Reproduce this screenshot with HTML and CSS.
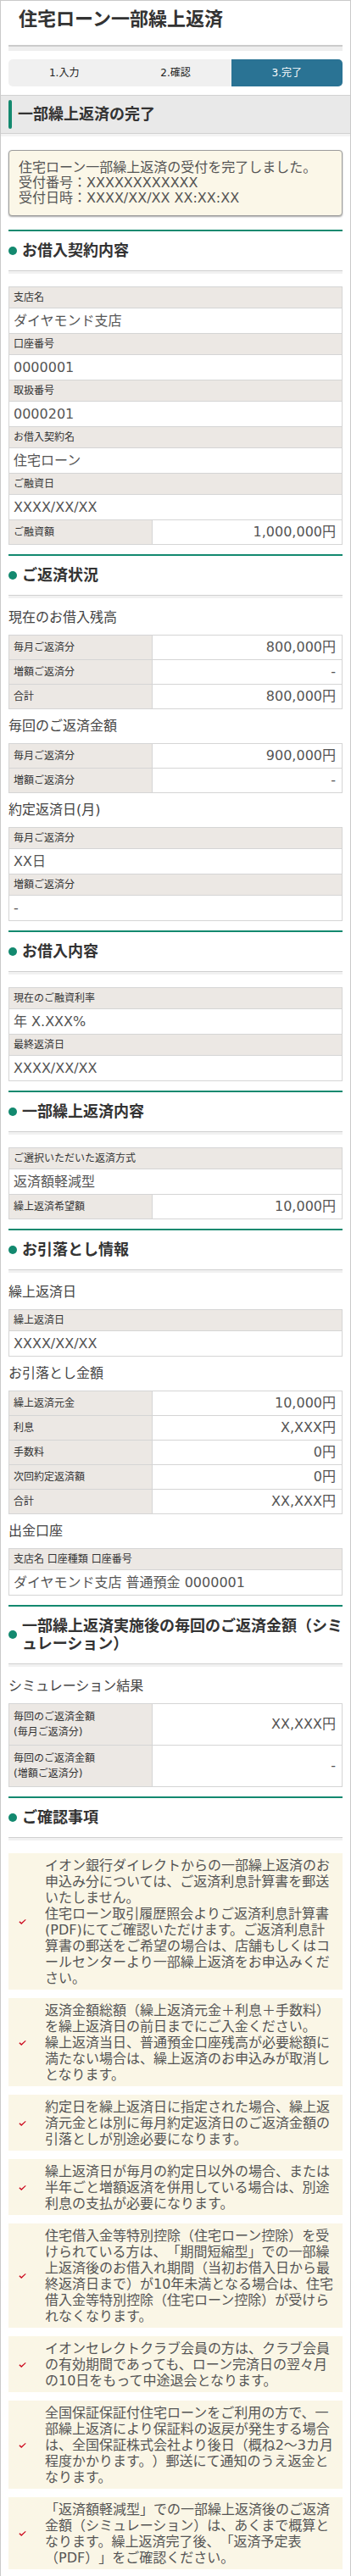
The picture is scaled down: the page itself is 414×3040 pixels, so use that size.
FILE: index.html
```html
<!DOCTYPE html>
<html lang="ja">
  <head>
    <meta charset="utf-8">
    <title>住宅ローン一部繰上返済</title>
    <link rel="stylesheet" href="styles.css">
  </head>
  <body>
    <div class="page">
      <div class="inner">
        <h1 class="page-title">住宅ローン一部繰上返済</h1>
        <ol class="steps">
          <li>1.入力</li>
          <li>2.確認</li>
          <li class="current">3.完了</li>
        </ol>
      </div>

      <div class="band">
        <span class="band-bar"></span>
        <h2>一部繰上返済の完了</h2>
      </div>

      <div class="inner">
        <div class="message">
          住宅ローン一部繰上返済の受付を完了しました。<br>
          受付番号：XXXXXXXXXXXX<br>
          受付日時：XXXX/XX/XX XX:XX:XX
        </div>

        <section class="section">
          <h2 class="section-title"><span class="dot"></span><span>お借入契約内容</span></h2>
          <div class="section-body">
            <table class="info">
              <colgroup><col class="col-label"><col></colgroup>
              <tr><th colspan="2">支店名</th></tr>
              <tr><td colspan="2">ダイヤモンド支店</td></tr>
              <tr><th colspan="2">口座番号</th></tr>
              <tr><td colspan="2">0000001</td></tr>
              <tr><th colspan="2">取扱番号</th></tr>
              <tr><td colspan="2">0000201</td></tr>
              <tr><th colspan="2">お借入契約名</th></tr>
              <tr><td colspan="2">住宅ローン</td></tr>
              <tr><th colspan="2">ご融資日</th></tr>
              <tr><td colspan="2">XXXX/XX/XX</td></tr>
              <tr class="pair"><th>ご融資額</th><td class="amount">1,000,000円</td></tr>
            </table>
          </div>
        </section>

        <section class="section">
          <h2 class="section-title"><span class="dot"></span><span>ご返済状況</span></h2>
          <div class="section-body">
            <h3 class="sub-title">現在のお借入残高</h3>
            <table class="info">
              <colgroup><col class="col-label"><col></colgroup>
              <tr class="pair"><th>毎月ご返済分</th><td class="amount">800,000円</td></tr>
              <tr class="pair"><th>増額ご返済分</th><td class="amount">-</td></tr>
              <tr class="pair"><th>合計</th><td class="amount">800,000円</td></tr>
            </table>
            <h3 class="sub-title">毎回のご返済金額</h3>
            <table class="info">
              <colgroup><col class="col-label"><col></colgroup>
              <tr class="pair"><th>毎月ご返済分</th><td class="amount">900,000円</td></tr>
              <tr class="pair"><th>増額ご返済分</th><td class="amount">-</td></tr>
            </table>
            <h3 class="sub-title">約定返済日(月)</h3>
            <table class="info">
              <colgroup><col class="col-label"><col></colgroup>
              <tr><th colspan="2">毎月ご返済分</th></tr>
              <tr><td colspan="2">XX日</td></tr>
              <tr><th colspan="2">増額ご返済分</th></tr>
              <tr><td colspan="2">-</td></tr>
            </table>
          </div>
        </section>

        <section class="section">
          <h2 class="section-title"><span class="dot"></span><span>お借入内容</span></h2>
          <div class="section-body">
            <table class="info">
              <colgroup><col class="col-label"><col></colgroup>
              <tr><th colspan="2">現在のご融資利率</th></tr>
              <tr><td colspan="2">年 X.XXX%</td></tr>
              <tr><th colspan="2">最終返済日</th></tr>
              <tr><td colspan="2">XXXX/XX/XX</td></tr>
            </table>
          </div>
        </section>

        <section class="section">
          <h2 class="section-title"><span class="dot"></span><span>一部繰上返済内容</span></h2>
          <div class="section-body">
            <table class="info">
              <colgroup><col class="col-label"><col></colgroup>
              <tr><th colspan="2">ご選択いただいた返済方式</th></tr>
              <tr><td colspan="2">返済額軽減型</td></tr>
              <tr class="pair"><th>繰上返済希望額</th><td class="amount">10,000円</td></tr>
            </table>
          </div>
        </section>

        <section class="section">
          <h2 class="section-title"><span class="dot"></span><span>お引落とし情報</span></h2>
          <div class="section-body">
            <h3 class="sub-title">繰上返済日</h3>
            <table class="info">
              <colgroup><col class="col-label"><col></colgroup>
              <tr><th colspan="2">繰上返済日</th></tr>
              <tr><td colspan="2">XXXX/XX/XX</td></tr>
            </table>
            <h3 class="sub-title">お引落とし金額</h3>
            <table class="info">
              <colgroup><col class="col-label"><col></colgroup>
              <tr class="pair"><th>繰上返済元金</th><td class="amount">10,000円</td></tr>
              <tr class="pair"><th>利息</th><td class="amount">X,XXX円</td></tr>
              <tr class="pair"><th>手数料</th><td class="amount">0円</td></tr>
              <tr class="pair"><th>次回約定返済額</th><td class="amount">0円</td></tr>
              <tr class="pair"><th>合計</th><td class="amount">XX,XXX円</td></tr>
            </table>
            <h3 class="sub-title">出金口座</h3>
            <table class="info">
              <colgroup><col class="col-label"><col></colgroup>
              <tr><th colspan="2">支店名 口座種類 口座番号</th></tr>
              <tr><td colspan="2">ダイヤモンド支店 普通預金 0000001</td></tr>
            </table>
          </div>
        </section>

        <section class="section">
          <h2 class="section-title"><span class="dot"></span><span>一部繰上返済実施後の毎回のご返済金額（シミュレーション）</span></h2>
          <div class="section-body">
            <h3 class="sub-title">シミュレーション結果</h3>
            <table class="info">
              <colgroup><col class="col-label"><col></colgroup>
              <tr class="pair"><th class="multi">毎回のご返済金額<br>(毎月ご返済分)</th><td class="amount">XX,XXX円</td></tr>
              <tr class="pair"><th class="multi">毎回のご返済金額<br>(増額ご返済分)</th><td class="amount">-</td></tr>
            </table>
          </div>
        </section>

        <section class="section">
          <h2 class="section-title"><span class="dot"></span><span>ご確認事項</span></h2>
          <div class="section-body">
            <ul class="notes">
              <li class="note">
                <svg class="check" viewBox="0 0 10 8"><path d="M0.4 4.4 L1.6 3.3 L3.6 5 L8.8 0.6 L9.6 1.5 L3.6 7.4 Z"/></svg>
                <p>イオン銀行ダイレクトからの一部繰上返済のお申込み分については、ご返済利息計算書を郵送いたしません。<br>住宅ローン取引履歴照会よりご返済利息計算書(PDF)にてご確認いただけます。ご返済利息計算書の郵送をご希望の場合は、店舗もしくはコールセンターより一部繰上返済をお申込みください。</p>
              </li>
              <li class="note">
                <svg class="check" viewBox="0 0 10 8"><path d="M0.4 4.4 L1.6 3.3 L3.6 5 L8.8 0.6 L9.6 1.5 L3.6 7.4 Z"/></svg>
                <p>返済金額総額（繰上返済元金＋利息＋手数料）を繰上返済日の前日までにご入金ください。<br>繰上返済当日、普通預金口座残高が必要総額に満たない場合は、繰上返済のお申込みが取消しとなります。</p>
              </li>
              <li class="note">
                <svg class="check" viewBox="0 0 10 8"><path d="M0.4 4.4 L1.6 3.3 L3.6 5 L8.8 0.6 L9.6 1.5 L3.6 7.4 Z"/></svg>
                <p>約定日を繰上返済日に指定された場合、繰上返済元金とは別に毎月約定返済日のご返済金額の引落としが別途必要になります。</p>
              </li>
              <li class="note">
                <svg class="check" viewBox="0 0 10 8"><path d="M0.4 4.4 L1.6 3.3 L3.6 5 L8.8 0.6 L9.6 1.5 L3.6 7.4 Z"/></svg>
                <p>繰上返済日が毎月の約定日以外の場合、または半年ごと増額返済を併用している場合は、別途利息の支払が必要になります。</p>
              </li>
              <li class="note">
                <svg class="check" viewBox="0 0 10 8"><path d="M0.4 4.4 L1.6 3.3 L3.6 5 L8.8 0.6 L9.6 1.5 L3.6 7.4 Z"/></svg>
                <p>住宅借入金等特別控除（住宅ローン控除）を受けられている方は、「期間短縮型」での一部繰上返済後のお借入れ期間（当初お借入日から最終返済日まで）が10年未満となる場合は、住宅借入金等特別控除（住宅ローン控除）が受けられなくなります。</p>
              </li>
              <li class="note">
                <svg class="check" viewBox="0 0 10 8"><path d="M0.4 4.4 L1.6 3.3 L3.6 5 L8.8 0.6 L9.6 1.5 L3.6 7.4 Z"/></svg>
                <p>イオンセレクトクラブ会員の方は、クラブ会員の有効期間であっても、ローン完済日の翌々月の10日をもって中途退会となります。</p>
              </li>
              <li class="note">
                <svg class="check" viewBox="0 0 10 8"><path d="M0.4 4.4 L1.6 3.3 L3.6 5 L8.8 0.6 L9.6 1.5 L3.6 7.4 Z"/></svg>
                <p>全国保証保証付住宅ローンをご利用の方で、一部繰上返済により保証料の返戻が発生する場合は、全国保証株式会社より後日（概ね2～3カ月程度かかります。）郵送にて通知のうえ返金となります。</p>
              </li>
              <li class="note">
                <svg class="check" viewBox="0 0 10 8"><path d="M0.4 4.4 L1.6 3.3 L3.6 5 L8.8 0.6 L9.6 1.5 L3.6 7.4 Z"/></svg>
                <p>「返済額軽減型」での一部繰上返済後のご返済金額（シミュレーション）は、あくまで概算となります。繰上返済完了後、「返済予定表（PDF）」をご確認ください。</p>
              </li>
            </ul>
          </div>
        </section>
      </div>
    </div>
  </body>
</html>
```

FILE: styles.css
```css
* {
  box-sizing: border-box;
}

html,
body {
  margin: 0;
  padding: 0;
}

body {
  background: #fff;
  font-family: 'DejaVu Sans', 'Noto Sans CJK JP', sans-serif;
  color: #333;
  text-spacing-trim: space-all;
}

.page {
  width: 414px;
  min-height: 3040px;
  border: 1px solid #cacaca;
}

.inner {
  padding: 0 9px;
}

/* ヘッダー */
.page-title {
  margin: 0;
  padding: 7px 12px 15px;
  font-size: 22px;
  line-height: 30px;
  font-weight: bold;
  color: #333;
  border-bottom: 2px solid #cbcbcb;
  box-shadow: 0 5px 0 #eeeeee;
}

.steps {
  display: flex;
  list-style: none;
  margin: 15px 0 0;
  padding: 0;
  background: #f0f0f0;
  border-radius: 5px;
  overflow: hidden;
}

.steps li {
  flex: 1;
  text-align: center;
  font-size: 12px;
  line-height: 32px;
  color: #222;
}

.steps li.current {
  background: #2a7394;
  color: #fff;
}

.band {
  display: flex;
  align-items: center;
  margin-top: 10px;
  padding: 5px 9px;
  background: #e9e9e9;
  border-top: 1px solid #d2d2d2;
  border-bottom: 1px solid #d2d2d2;
  box-shadow: 0 3px 0 #f3f3f3;
}

.band-bar {
  width: 4px;
  height: 34px;
  border-radius: 2px;
  background: #13896f;
}

.band h2 {
  margin: 0 0 0 7px;
  font-size: 18px;
  line-height: 34px;
  font-weight: bold;
  color: #333;
}

.message {
  margin: 19px 0 16px;
  padding: 11px;
  border: 1px solid #9c9c9c;
  border-radius: 4px;
  background: #fbf7e8;
  box-shadow: 0 1px 2px rgba(0, 0, 0, 0.35);
  font-size: 16px;
  line-height: 18px;
  color: #555;
}

/* セクション */
.section {
  margin-top: 11px;
}

.section-title {
  display: flex;
  align-items: center;
  margin: 0;
  padding: 12px 0 13px;
  border-top: 2px solid #13896f;
  border-bottom: 1px solid #d0d0d0;
  box-shadow: 0 3px 0 #f1f1f1;
  font-size: 18px;
  line-height: 21px;
  font-weight: bold;
  color: #333;
}

.dot {
  flex-shrink: 0;
  width: 10px;
  height: 10px;
  margin-right: 6px;
  border-radius: 50%;
  background: #13896f;
}

.section-body {
  padding-top: 16px;
}

.sub-title {
  margin: 0 0 10px;
  font-size: 16px;
  line-height: 20px;
  font-weight: normal;
  color: #444;
}

.info {
  width: 100%;
  margin: 0 0 10px;
  border-collapse: collapse;
  table-layout: fixed;
}

.section-body > .info:first-child,
.section-body > .notes:first-child {
  margin-top: 2px;
}

.col-label {
  width: 43%;
}

.info th,
.info td {
  border: 1px solid #d5d5d5;
}

.info th {
  padding: 3px 5px;
  background: #ece8e4;
  font-size: 12px;
  line-height: 18px;
  font-weight: normal;
  text-align: left;
  color: #333;
}

.info td {
  padding: 5px;
  background: #fff;
  font-size: 16px;
  line-height: 19px;
  color: #555;
}

.info .pair th {
  padding: 5px;
}

.info .pair th.multi {
  padding: 6px 5px;
}

.info td.amount {
  padding: 5px 7px;
  line-height: 18px;
  text-align: right;
}

/* ご確認事項 */
.notes {
  list-style: none;
  margin: 0;
  padding: 0;
}

.note {
  display: flex;
  align-items: center;
  margin-bottom: 10px;
  padding: 5px 7px 4px 12px;
  background: #faf6e6;
}

.check {
  flex-shrink: 0;
  width: 9px;
  height: 8px;
  margin-right: 22px;
  fill: #cc0a1f;
}

.note p {
  flex: 1;
  margin: 0;
  font-size: 16px;
  line-height: 19px;
  color: #555;
}
```
